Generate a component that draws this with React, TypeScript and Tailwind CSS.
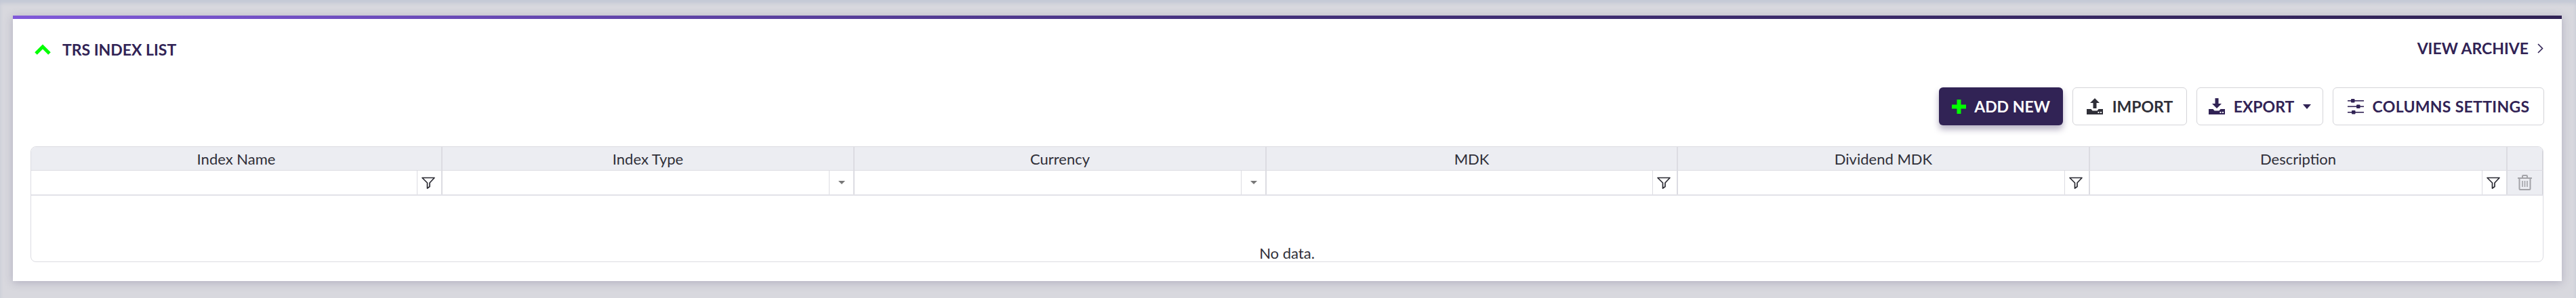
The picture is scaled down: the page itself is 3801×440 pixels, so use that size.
const COLUMNS = [
  { name: "Index Name", kind: "text" },
  { name: "Index Type", kind: "select" },
  { name: "Currency", kind: "select" },
  { name: "MDK", kind: "text" },
  { name: "Dividend MDK", kind: "text" },
  { name: "Description", kind: "text" },
];

function FilterIcon() {
  return (
    <svg width="20" height="18" viewBox="0 0 20 18" fill="none" stroke="#2b2b33" strokeWidth="1.7" strokeLinejoin="round" className="mr-[3px]">
      <path d="M1 1.5h18l-7 7.5v5.5L8.5 17V9z" />
    </svg>
  );
}

function TrashIcon() {
  return (
    <svg width="21" height="23" viewBox="0 0 21 23" fill="none" stroke="#a3a3a8" strokeWidth="2">
      <path d="M0 5h21M7 4.5V2.2C7 1.5 7.5 1 8.2 1h4.6c.7 0 1.2.5 1.2 1.2v2.3" />
      <path d="M2.5 5v15.5c0 .9.6 1.5 1.5 1.5h13c.9 0 1.5-.6 1.5-1.5V5" />
      <path d="M7 9v9M10.5 9v9M14 9v9" strokeWidth="1.6" />
    </svg>
  );
}

function TrayArrow({ color, up }: { color: string; up: boolean }) {
  return (
    <svg width="24" height="24" viewBox="0 0 24 24" fill={color}>
      {up ? <path d="M12 0l7 7h-4.5v8h-5V7H5z" /> : <path d="M9.5 0h5v8H19l-7 7-7-7h4.5z" />}
      <path d="M0 16h6.5l2 2.5h7l2-2.5H24v8H0z" />
      <rect x="16.5" y="20" width="2" height="2" fill="#fff" />
      <rect x="20" y="20" width="2" height="2" fill="#fff" />
    </svg>
  );
}

function SlidersIcon() {
  return (
    <svg width="24" height="24" viewBox="0 0 24 24" fill="#312355">
      <rect x="0" y="3" width="24" height="1.6" />
      <rect x="5" y="1" width="5.5" height="5.5" rx="1" />
      <rect x="0" y="11.5" width="24" height="1.6" />
      <rect x="13" y="9.5" width="5.5" height="5.5" rx="1" />
      <rect x="0" y="20" width="24" height="1.6" />
      <rect x="6" y="18" width="5.5" height="5.5" rx="1" />
    </svg>
  );
}

export default function App() {
  return (
    <div className="h-[440px] w-[3801px] overflow-hidden bg-[#d8d8de] pt-[23px] pl-[19px] font-['Lato',sans-serif] shadow-[inset_0_5px_5px_rgba(150,165,195,0.3)]">
      <div className="h-[392px] w-[3761px] bg-white shadow-[0_2px_12px_rgba(60,50,100,0.25)]">
        <div className="h-[5px] bg-gradient-to-r from-[#8059d9] via-[#43307a] via-50% to-[#312355]" />

        <div className="flex h-[101px] items-start justify-between pt-[30px] pr-[27px] pl-[32px]">
          <div className="flex items-center">
            <svg width="24" height="16" viewBox="0 0 24 16" fill="none" stroke="#00ff00" strokeWidth="5">
              <path d="M2 14L12 4l10 10" />
            </svg>
            <span className="ml-[17px] text-[23px] leading-[30px] font-bold text-[#312355]">TRS INDEX LIST</span>
          </div>
          <div className="-mt-[2px] flex items-center text-[#312355]">
            <span className="text-[23px] leading-[30px] font-bold">VIEW ARCHIVE</span>
            <svg width="9" height="15" viewBox="0 0 9 15" fill="none" stroke="#312355" strokeWidth="1.6" className="ml-[13px]">
              <path d="M1 1l6.5 6.5L1 14" />
            </svg>
          </div>
        </div>

        <div className="flex h-[87px] items-start justify-end gap-[14px] pr-[26px]">
          <button className="flex h-[56px] w-[183px] items-center justify-center gap-[12px] rounded-[6px] bg-[#312355] text-[23px] font-bold text-white shadow-[0_6px_10px_rgba(49,35,85,0.35)]">
            <svg width="21" height="21" viewBox="0 0 21 21" fill="#00ff00">
              <path d="M7.5 0h6v7.5H21v6h-7.5V21h-6v-7.5H0v-6h7.5z" />
            </svg>
            ADD NEW
          </button>
          <button className="flex h-[56px] w-[169px] items-center justify-center gap-[14px] rounded-[6px] border border-[#d4d4d8] text-[23px] font-bold text-[#2f2f38]">
            <TrayArrow color="#2f2f38" up />
            IMPORT
          </button>
          <button className="flex h-[56px] w-[187px] items-center justify-center gap-[13px] rounded-[6px] border border-[#d4d4d8] text-[23px] font-bold text-[#312355]">
            <TrayArrow color="#312355" up={false} />
            EXPORT
            <span className="h-0 w-0 border-x-[6px] border-t-[7px] border-x-transparent border-t-[#312355]" />
          </button>
          <button className="flex h-[56px] w-[312px] items-center justify-center gap-[13px] rounded-[6px] border border-[#d4d4d8] text-[23px] font-bold tracking-[0.3px] text-[#312355]">
            <SlidersIcon />
            COLUMNS SETTINGS
          </button>
        </div>

        <div className="ml-[26px] w-[3708px] overflow-hidden rounded-[8px] border border-[#dcdce2]">
          <div className="grid grid-cols-[607px_608px_608px_607px_608px_616px_1fr] border-b border-[#dcdce2] bg-[#ecedf2]">
            {COLUMNS.map((col) => (
              <div key={col.name} className="flex h-[34px] items-center justify-center border-r-2 border-[#dcdce2] text-[22px] text-[#2f2f38]">
                {col.name}
              </div>
            ))}
            <div className="border-r border-[#d4d4da]" />
          </div>
          <div className="grid grid-cols-[607px_608px_608px_607px_608px_616px_1fr] border-b-2 border-[#e2e2e8]">
            {COLUMNS.map((col) => (
              <div key={col.name} className="flex h-[35px] justify-end border-r-2 border-[#dcdce2]">
                <div className="flex w-[36px] items-center justify-center border-l border-[#dcdce2]">
                  {col.kind === "text" ? (
                    <FilterIcon />
                  ) : (
                    <span className="h-0 w-0 border-x-[5px] border-t-[5px] border-x-transparent border-t-[#777]" />
                  )}
                </div>
              </div>
            ))}
            <div className="flex items-center justify-center border-r border-[#d4d4da] bg-[#ecedf2]">
              <TrashIcon />
            </div>
          </div>
          <div className="flex h-[97px] items-end justify-center text-[22px] leading-[24px] text-[#2f2f38]">No data.</div>
        </div>
      </div>
    </div>
  );
}
